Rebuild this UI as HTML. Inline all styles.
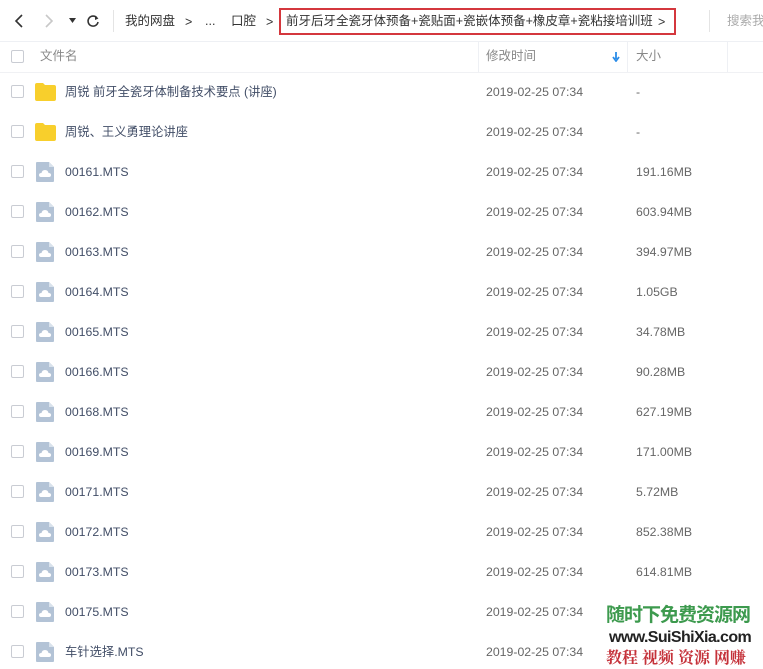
<!DOCTYPE html>
<html><head><meta charset="utf-8"><style>
*{margin:0;padding:0;box-sizing:border-box}
body{width:763px;height:669px;overflow:hidden;background:#fff;font-family:"Liberation Sans","Noto Sans CJK SC",sans-serif;font-size:12px;line-height:16px;color:#424e67;position:relative}
.a{position:absolute;white-space:nowrap}
.cb{position:absolute;left:11px;width:13px;height:13px;border:1px solid #c9ccd3;border-radius:2px;background:#fff}
.nm{position:absolute;left:65px;font-size:12.3px;color:#424e67}
.tm{position:absolute;left:486px;color:#666;font-size:12.3px}
.sz{position:absolute;left:636px;color:#666;font-size:12.3px}
.bc{color:#333;font-size:12.5px;top:13px}
</style></head><body>
<div class="a" style="left:0;top:41px;width:763px;height:1px;background:#eef0f4"></div>
<svg class="a" style="left:12px;top:13px" width="14" height="16"><path d="M10 2 L4 8 L10 14" stroke="#333" stroke-width="1.6" fill="none"/></svg>
<svg class="a" style="left:42px;top:13px" width="14" height="16"><path d="M4 2 L10 8 L4 14" stroke="#c8c8c8" stroke-width="1.6" fill="none"/></svg>
<svg class="a" style="left:69px;top:18px" width="8" height="6"><path d="M0 0 L7 0 L3.5 5Z" fill="#333"/></svg>
<svg class="a" style="left:86px;top:14px" width="14" height="14"><path d="M11 4 A5 5 0 1 0 12 8" stroke="#333" stroke-width="1.6" fill="none"/><path d="M9 2 L12.5 4.5 L9 6Z" fill="#333"/></svg>
<div class="a" style="left:113px;top:10px;width:1px;height:22px;background:#e4e4e4"></div>
<div class="a bc" style="left:125px">我的网盘</div>
<div class="a bc" style="left:185px;top:14px">&gt;</div>
<div class="a bc" style="left:205px">...</div>
<div class="a bc" style="left:231px">口腔</div>
<div class="a bc" style="left:266px;top:14px">&gt;</div>
<div class="a" style="left:279px;top:8px;width:397px;height:27px;border:2px solid #d4373d"></div>
<div class="a bc" style="left:286px">前牙后牙全瓷牙体预备+瓷贴面+瓷嵌体预备+橡皮章+瓷粘接培训班</div>
<div class="a bc" style="left:658px;top:14px">&gt;</div>
<div class="a" style="left:709px;top:10px;width:1px;height:22px;background:#e4e4e4"></div>
<div class="a bc" style="left:727px;color:#aaa">搜索我</div>
<div class="a" style="left:0;top:72px;width:763px;height:1px;background:#f0f1f4"></div>
<div class="a" style="left:478px;top:42px;width:1px;height:30px;background:#eef0f4"></div>
<div class="a" style="left:627px;top:42px;width:1px;height:30px;background:#eef0f4"></div>
<div class="a" style="left:727px;top:42px;width:1px;height:30px;background:#eef0f4"></div>
<div class="cb" style="top:50px"></div>
<div class="a" style="left:40px;top:48px;color:#888;font-size:12.5px">文件名</div>
<div class="a" style="left:486px;top:48px;color:#888;font-size:12.5px">修改时间</div>
<svg class="a" style="left:612px;top:52px" width="8" height="10"><path d="M4 0 V7 M1 5 L4 9 L7 5" stroke="#2a8ce8" stroke-width="1.8" fill="none"/></svg>
<div class="a" style="left:636px;top:48px;color:#888;font-size:12.5px">大小</div>
<div id="rows"></div>
<script>
var rows=[["f","周锐 前牙全瓷牙体制备技术要点 (讲座)","-"],["f","周锐、王义勇理论讲座","-"],["v","00161.MTS","191.16MB"],["v","00162.MTS","603.94MB"],["v","00163.MTS","394.97MB"],["v","00164.MTS","1.05GB"],["v","00165.MTS","34.78MB"],["v","00166.MTS","90.28MB"],["v","00168.MTS","627.19MB"],["v","00169.MTS","171.00MB"],["v","00171.MTS","5.72MB"],["v","00172.MTS","852.38MB"],["v","00173.MTS","614.81MB"],["v","00175.MTS",""],["v","车针选择.MTS",""]];
var h="";rows.forEach(function(r,i){var c=92+i*40;
h+='<div class="cb" style="top:'+(c-7)+'px"></div>';
if(r[0]=="f")h+='<svg class="a" style="left:35px;top:'+(c-9)+'px" width="21" height="18"><path d="M0 2 Q0 0 2 0 H8 L10 2 H19 Q21 2 21 4 V16 Q21 18 19 18 H2 Q0 18 0 16Z" fill="#f8cf2c"/></svg>';
else h+='<svg class="a" style="left:36px;top:'+(c-10)+'px" width="18" height="20"><path d="M1 0 H13 L18 5 V19 Q18 20 17 20 H1 Q0 20 0 19 V1 Q0 0 1 0Z" fill="#b3c3d6"/><path d="M13 0 V5 H18Z" fill="#d9e2ec"/><path d="M5 15 Q3 15 3 13 Q3 11 5.5 11 Q6 8 9 8 Q12 8 12.5 11 Q15 11 15 13 Q15 15 13 15Z" fill="#fff"/></svg>';
var ty=(c-8);
h+='<div class="nm" style="top:'+ty+'px">'+r[1]+'</div><div class="tm" style="top:'+ty+'px">2019-02-25 07:34</div><div class="sz" style="top:'+ty+'px">'+r[2]+'</div>';});
document.getElementById("rows").innerHTML=h;
</script>
<div class="a" style="left:606px;top:603px;font-size:19px;font-weight:bold;color:#3d9a4e;font-family:'Noto Sans CJK SC',sans-serif;letter-spacing:-1px;line-height:22px">随时下免费资源网</div>
<div class="a" style="left:609px;top:628px;font-size:16px;font-weight:bold;color:#222;letter-spacing:-0.6px;line-height:19px">www.SuiShiXia.com</div>
<div class="a" style="left:606px;top:647px;font-size:16px;font-weight:bold;color:#c5323a;font-family:'Noto Serif CJK SC',serif;line-height:20px">教程 视频 资源 网赚</div>
</body></html>
